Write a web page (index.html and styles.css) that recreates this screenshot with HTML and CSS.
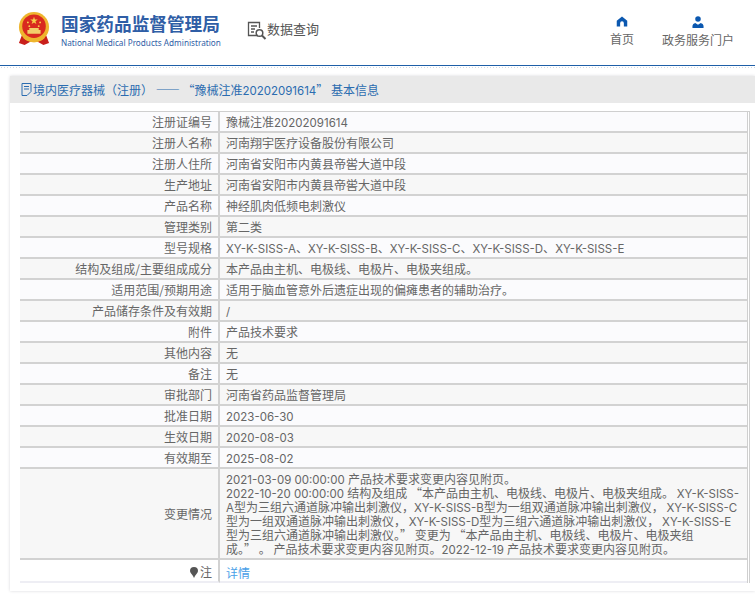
FILE: index.html
```html
<!DOCTYPE html>
<html lang="zh-CN">
<head>
<meta charset="utf-8">
<title>数据查询</title>
<link rel="stylesheet" href="styles.css">
</head>
<body>
<header class="site-header">
  <div class="brand">
    <svg class="emblem" width="32" height="36" viewBox="0 0 34 36">
      <path d="M4 25 L1 33 L7 35 L14 31 L20 31 L27 35 L33 33 L30 25 Z" fill="#c9201c"/>
      <circle cx="17" cy="16" r="16" fill="#eeb52e"/>
      <circle cx="17" cy="15" r="12.5" fill="#d92a1f"/>
      <path d="M17 5l1 3h3l-2.500 1.800 1 3L17 11l-2.500 1.800 1-3L13 8h3z" fill="#f6d04a"/>
      <circle cx="10.500" cy="11" r="1" fill="#f6d04a"/><circle cx="23.500" cy="11" r="1" fill="#f6d04a"/>
      <circle cx="12" cy="15" r="1" fill="#f6d04a"/><circle cx="22" cy="15" r="1" fill="#f6d04a"/>
      <path d="M12 17h10v2h2v4H10v-4h2z" fill="#f3cf6a"/>
      <path d="M6 24 Q17 34 28 24 L28 28 Q17 36 6 28Z" fill="#eeb52e"/>
    </svg>
    <div class="brand-text">
      <div class="brand-cn">国家药品监督管理局</div>
      <div class="brand-en">National Medical Products Administration</div>
    </div>
  </div>
  <div class="query">
    <svg class="query-icon" width="20" height="20" viewBox="0 0 20 20" fill="none" stroke="#555">
      <path d="M11 14.500H1.500V1.500H12.500V7" stroke-width="1.300"/>
      <path d="M4 5h6M4 8h4M4 11h3" stroke-width="1.300"/>
      <circle cx="12.500" cy="12" r="3.300" stroke-width="1.500"/>
      <path d="M15 14.500l3.500 3.500" stroke-width="2"/>
    </svg>
    <span>数据查询</span>
  </div>
  <nav class="top-nav">
    <a class="nav-item">
      <svg width="12" height="11" viewBox="0 0 14 13"><path d="M7 .5L.8 5.500V12.500H4.800V8.500a2.200 2.200 0 0 1 4.400 0V12.500H13.200V5.500Z" fill="#0b58b0"/></svg>
      <span>首页</span>
    </a>
    <a class="nav-item">
      <svg width="12" height="12" viewBox="0 0 13 13"><circle cx="6.500" cy="3.200" r="3" fill="#0b58b0"/><path d="M.5 13V10.500Q.8 8 3.500 7.500L6.500 9.500 9.500 7.500Q12.200 8 12.500 10.500V13Z" fill="#0b58b0"/></svg>
      <span>政务服务门户</span>
    </a>
  </nav>
</header>
<div class="dots"></div>
<main class="panel">
  <h1 class="panel-title">
    <svg width="11" height="13" viewBox="0 0 11 13" fill="none" stroke="#2b6cb0"><path d="M1 .5H10V8.500L6 12.500H1Z"/><path d="M3 3.500H8M3 6H8" /></svg>
    <span>境内医疗器械（注册） —— “豫械注准<span class="lat">20202091614</span>” 基本信息</span>
  </h1>
  <table class="info">
    <tbody>
      <tr><th>注册证编号</th><td>豫械注准<span class="lat">20202091614</span></td></tr>
      <tr><th>注册人名称</th><td>河南翔宇医疗设备股份有限公司</td></tr>
      <tr><th>注册人住所</th><td>河南省安阳市内黄县帝喾大道中段</td></tr>
      <tr><th>生产地址</th><td>河南省安阳市内黄县帝喾大道中段</td></tr>
      <tr><th>产品名称</th><td>神经肌肉低频电刺激仪</td></tr>
      <tr><th>管理类别</th><td>第二类</td></tr>
      <tr><th>型号规格</th><td><span class="lat">XY-K-SISS-A</span>、<span class="lat">XY-K-SISS-B</span>、<span class="lat">XY-K-SISS-C</span>、<span class="lat">XY-K-SISS-D</span>、<span class="lat">XY-K-SISS-E</span></td></tr>
      <tr><th>结构及组成/主要组成成分</th><td>本产品由主机、电极线、电极片、电极夹组成。</td></tr>
      <tr><th>适用范围/预期用途</th><td>适用于脑血管意外后遗症出现的偏瘫患者的辅助治疗。</td></tr>
      <tr><th>产品储存条件及有效期</th><td><span class="lat">/</span></td></tr>
      <tr><th>附件</th><td>产品技术要求</td></tr>
      <tr><th>其他内容</th><td>无</td></tr>
      <tr><th>备注</th><td>无</td></tr>
      <tr><th>审批部门</th><td>河南省药品监督管理局</td></tr>
      <tr><th>批准日期</th><td><span class="lat">2023-06-30</span></td></tr>
      <tr><th>生效日期</th><td><span class="lat">2020-08-03</span></td></tr>
      <tr><th>有效期至</th><td><span class="lat">2025-08-02</span></td></tr>
      <tr class="changes"><th>变更情况</th><td><span class="lat">2021-03-09 00:00:00 </span>产品技术要求变更内容见附页。<br><span class="lat">2022-10-20 00:00:00 </span>结构及组成 “本产品由主机、电极线、电极片、电极夹组成。 <span class="lat">XY-K-SISS-A</span>型为三组六通道脉冲输出刺激仪，<span class="lat">XY-K-SISS-B</span>型为一组双通道脉冲输出刺激仪， <span class="lat">XY-K-SISS-C</span>型为一组双通道脉冲输出刺激仪， <span class="lat">XY-K-SISS-D</span>型为三组六通道脉冲输出刺激仪， <span class="lat">XY-K-SISS-E</span>型为三组六通道脉冲输出刺激仪。” 变更为 “本产品由主机、电极线、电极片、电极夹组<br>成。” 。 产品技术要求变更内容见附页。<span class="lat">2022-12-19 </span>产品技术要求变更内容见附页。</td></tr>
      <tr class="note"><th><svg class="bulb" width="8" height="11" viewBox="0 0 8 11"><path d="M4 0a4 4 0 0 1 4 4c0 2-2 3-3 5L4 11 3 9C2 7 0 6 0 4a4 4 0 0 1 4-4z" fill="#555"/></svg>注</th><td><a class="detail">详情</a></td></tr>
    </tbody>
  </table>
</main>
</body>
</html>
```
FILE: styles.css
```css
* { box-sizing: border-box; }
html, body { margin: 0; height: 597px; overflow: hidden; }
body {
  background: #fff;
  font: 12px/14px "Noto Sans CJK SC", sans-serif;
  color: #666;
}
.lat { font-family: Inter, "Noto Sans", sans-serif; font-size: 11.5px; line-height: 0; }
.site-header {
  height: 66px;
  border-bottom: 1px solid #1f5fa8;
  display: flex;
  align-items: flex-start;
  padding-left: 18px;
}
.brand { display: flex; gap: 11px; padding-top: 11px; width: 229px; }
.brand-cn {
  font-size: 17.66px;
  line-height: 22px;
  margin-top: 2px;
  font-weight: 700;
  color: #2f5ea6;
  white-space: nowrap;
}
.brand-en {
  font-size: 8.2px;
  line-height: 11px;
  margin-top: 2px;
  font-family: "Noto Sans", sans-serif;
  color: #2f5ea6;
  white-space: nowrap;
}
.query {
  display: flex;
  align-items: flex-start;
  padding-top: 20px;
  font-size: 13px;
  line-height: 18px;
  color: #555;
}
.query-icon { margin-top: 1px; }
.top-nav {
  margin-left: auto;
  display: flex;
  gap: 28px;
  padding: 16px 21px 0 0;
}
.nav-item {
  display: flex;
  flex-direction: column;
  align-items: center;
  gap: 4px;
  font-size: 12px;
  line-height: 16px;
  color: #666;
}
.dots {
  height: 3px;
  background-image: radial-gradient(#cfd8e3 .6px, transparent .8px);
  background-size: 3px 3px;
}
.panel {
  margin: 7px 0 0 10px;
  width: 745px;
  height: 515px;
  background: #fff;
  box-shadow: 0 0 3px #d8d8dc;
}
.panel-title {
  margin: 0;
  height: 27px;
  background: #e9e9e9;
  display: flex;
  align-items: center;
  gap: 1px;
  padding-left: 11px;
  font-size: 12px;
  font-weight: 400;
  color: #2b6cb0;
  white-space: pre;
}
.info {
  margin: 8px 0 0 10px;
  width: 730px;
  border-collapse: separate;
  border-spacing: 0;
  border-top: 1px solid #cfcfcf;
  border-right: 3px double #cfcfcf;
  table-layout: fixed;
}
.info th, .info td {
  height: 21px;
  padding: 1px 6px 0;
  border-bottom: 2px solid #d2d2d2;
  font-weight: 400;
  color: #666;
  line-height: 14px;
}
.info th {
  width: 200px;
  padding-right: 6px;
  text-align: right;
  border-right: 2px solid #d2d2d2;
}
.info tr:nth-child(odd) th, .info tr:nth-child(odd) td { background: #fbfbfd; }
.info tr:nth-child(even) th, .info tr:nth-child(even) td { background: #f7f7f7; }
.changes th, .changes td { height: 91px; }
.info tr.changes td { background: #f7f7f7; }
.info tr.note th, .info tr.note td { height: 23px; padding-top: 2px; background: #fff; border-bottom-color: #eeeef4; }
.info tr.note td { padding-top: 4px; }
.bulb { margin-right: 2px; vertical-align: -1px; }
.detail { color: #4a9fe8; font-size: 12px; }
```
